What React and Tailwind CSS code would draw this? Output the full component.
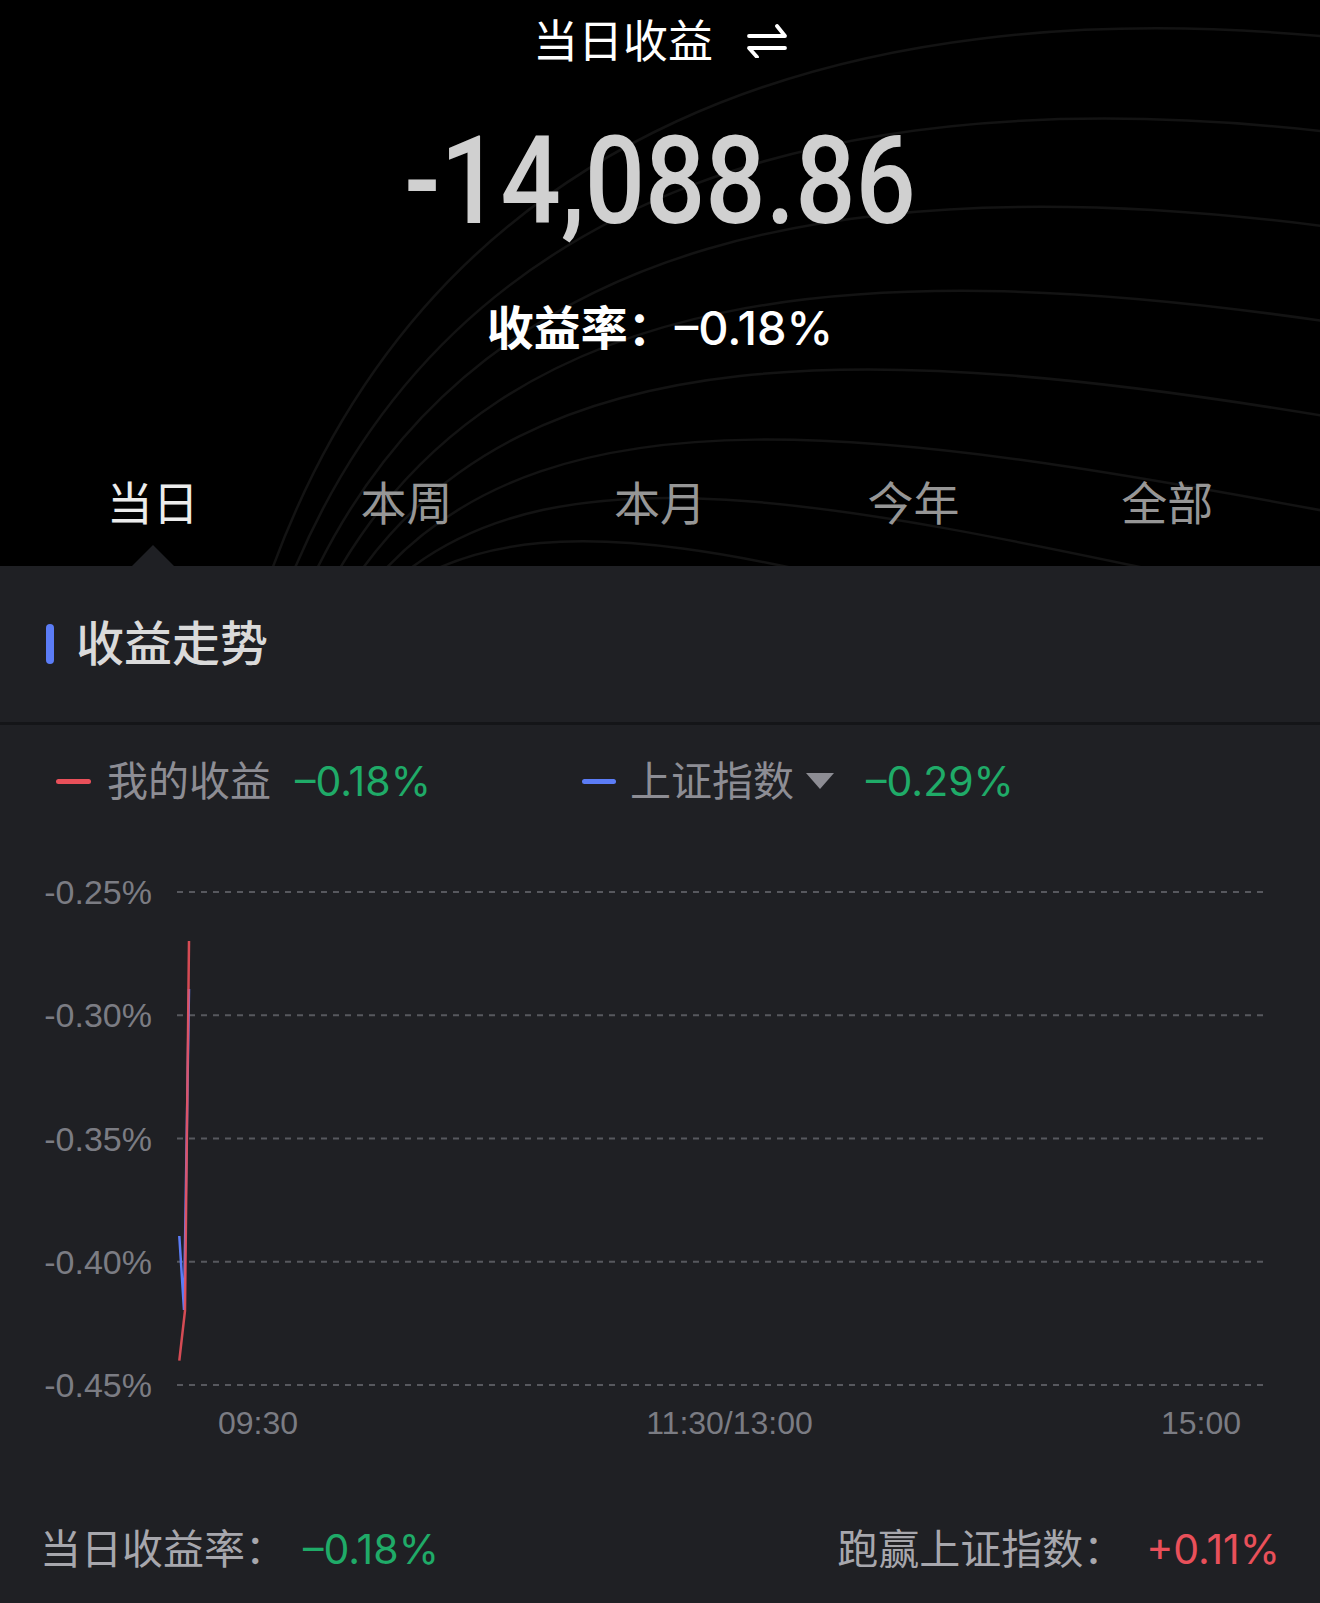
import React from 'react';

const tabs = ['当日', '本周', '本月', '今年', '全部'];
const yLabels = ['-0.25%', '-0.30%', '-0.35%', '-0.40%', '-0.45%'];
const gridY = [55, 178.25, 301.5, 424.75, 548];

function Arcs() {
  const curves = [];
  for (let i = 0; i < 11; i++) {
    const sx = 270 + i * 22;
    const ey = 37 + i * 95;
    const d = `M${sx} 575 C ${430 + i * 25} ${130 + i * 50}, ${840 + i * 10} ${-10 + i * 88}, 1330 ${ey}`;
    curves.push(<path key={i} d={d} fill="none" stroke="#ffffff" strokeOpacity={0.075} strokeWidth={2.5} />);
  }
  return (
    <svg className="absolute inset-0 h-full w-full" viewBox="0 0 1320 566" preserveAspectRatio="none">
      {curves}
    </svg>
  );
}

function SwapIcon() {
  return (
    <svg width="40" height="34" viewBox="0 0 40 34" fill="none" stroke="#ffffff" strokeWidth="3.8" strokeLinecap="round" strokeLinejoin="round">
      <path d="M2 12 H38 L30 2" />
      <path d="M38 24 H2 L10 33" />
    </svg>
  );
}

function Header() {
  return (
    <div className="relative h-[566px] overflow-hidden bg-black">
      <Arcs />
      <div className="relative flex h-full flex-col">
        <div className="flex h-[82px] items-center justify-center gap-[34px]">
          <span className="text-[45px] leading-none text-white">当日收益</span>
          <SwapIcon />
        </div>
        <div className="flex h-[200px] items-center justify-center">
          <span className="inline-block scale-x-[0.87] font-['Roboto',sans-serif] text-[122px] font-medium leading-none text-[#d0d0d0]">
            -14,088.86
          </span>
        </div>
        <div className="flex h-[90px] items-center justify-center text-[47px] leading-none text-white">
          <span className="font-bold">收益率：</span>
          <span className="font-medium">–0.18%</span>
        </div>
        <div className="h-[89px]" />
        <div className="grid h-[84px] grid-cols-5 items-center px-[26px]">
          {tabs.map((t, i) => (
            <div
              key={t}
              className={
                'text-center text-[46px] leading-none ' +
                (i === 0 ? 'text-[#ececec]' : 'text-[#969696]')
              }
            >
              {t}
            </div>
          ))}
        </div>
        <div className="grid h-[21px] grid-cols-5 px-[26px]">
          <div className="flex justify-center">
            <div className="h-0 w-0 border-b-[21px] border-l-[21px] border-r-[21px] border-b-[#1f2024] border-l-transparent border-r-transparent" />
          </div>
        </div>
      </div>
    </div>
  );
}

function Legend() {
  return (
    <div className="flex h-[112px] items-center pl-[56px] text-[41px] leading-none">
      <div className="flex w-[526px] items-center">
        <div className="h-[5px] w-[35px] rounded-full bg-[#e9505a]" />
        <span className="ml-[16px] text-[#8d8d94]">我的收益</span>
        <span className="ml-[24px] text-[#1fab68]">–0.18%</span>
      </div>
      <div className="flex items-center">
        <div className="h-[5px] w-[34px] rounded-full bg-[#5b7cf6]" />
        <span className="ml-[14px] text-[#8d8d94]">上证指数</span>
        <div className="ml-[12px] h-0 w-0 border-l-[14px] border-r-[14px] border-t-[16px] border-l-transparent border-r-transparent border-t-[#8d8d94]" />
        <span className="ml-[32px] text-[#1fab68]">–0.29%</span>
      </div>
    </div>
  );
}

function Chart() {
  return (
    <div className="font-['Liberation_Sans',Arial,sans-serif] text-[#7b7c83]">
      <div className="flex">
        <div className="mt-[36px] flex h-[531px] w-[152px] flex-col justify-between">
          {yLabels.map((l) => (
            <div key={l} className="h-[38px] text-right text-[34px] leading-[38px]">
              {l}
            </div>
          ))}
        </div>
        <svg className="ml-[25px]" width="1086" height="567" viewBox="0 0 1086 567">
          {gridY.map((y) => (
            <line key={y} x1="0" x2="1086" y1={y} y2={y} stroke="#57585e" strokeWidth="2" strokeDasharray="6 6" />
          ))}
          <polyline points="2.3,399 7,473 12,152" fill="none" stroke="#5b7cf6" strokeWidth="2.5" />
          <polyline points="2.3,523.7 8,473.7 12,104" fill="none" stroke="#e9505a" strokeOpacity="0.9" strokeWidth="2.5" />
        </svg>
      </div>
      <div className="flex h-[38px] items-center justify-between pl-[218px] pr-[79px] text-[32px] leading-none">
        <span>09:30</span>
        <span>11:30/13:00</span>
        <span>15:00</span>
      </div>
    </div>
  );
}

export default function App() {
  return (
    <div className="min-h-[1603px] w-[1320px] bg-[#1f2024] font-['Inter','Noto_Sans_CJK_SC',sans-serif]">
      <Header />
      <div className="flex h-[156px] items-center pl-[46px]">
        <div className="h-[40px] w-[8px] rounded-full bg-[#5b7cf6]" />
        <span className="ml-[22px] text-[48px] font-medium leading-none text-[#dadada]">收益走势</span>
      </div>
      <div className="h-[3px] bg-[#141518]" />
      <Legend />
      <Chart />
      <div className="mt-[87px] flex h-[40px] items-center justify-between px-[40px] text-[41px] leading-none">
        <div className="flex items-center">
          <span className="text-[#a7a7ad]">当日收益率：</span>
          <span className="ml-[17px] text-[#1fab68]">–0.18%</span>
        </div>
        <div className="flex items-center">
          <span className="text-[#a7a7ad]">跑赢上证指数：</span>
          <span className="ml-[22px] text-[#e9505a]">+0.11%</span>
        </div>
      </div>
    </div>
  );
}
